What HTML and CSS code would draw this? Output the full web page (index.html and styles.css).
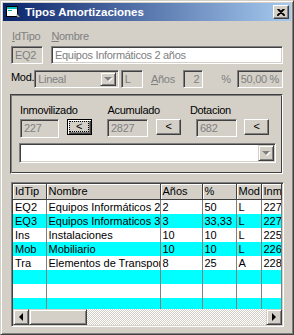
FILE: index.html
```html
<!DOCTYPE html>
<html lang="es">
<head>
    <meta charset="UTF-8">
    <title>Tipos Amortizaciones</title>
    <link rel="stylesheet" href="styles.css">
</head>
<body>
    <div class="window">
        <!-- Barra de título -->
        <div class="titlebar">
            <svg class="app-icon" width="16" height="16" viewBox="0 0 16 16">
                <rect x="1.5" y="2.5" width="11" height="10" fill="#fff" stroke="#000"/>
                <rect x="2" y="3" width="10" height="2" fill="#00c0c0"/>
                <rect x="3" y="6" width="4" height="1" fill="#00a0a0"/>
                <path d="M12 10 L15 13 L12 13 Z" fill="#c0c0c0" stroke="#606060" stroke-width="0.5"/>
            </svg>
            <span class="title">Tipos Amortizaciones</span>
            <div class="close-btn">
                <svg width="8" height="7" viewBox="0 0 8 7">
                    <path d="M0.5 0 L7.5 7 M7.5 0 L0.5 7 M1.5 0 L8 6.5 M6.5 0 L0 6.5" stroke="#000" stroke-width="1.2"/>
                </svg>
            </div>
        </div>

        <div class="content">
            <div class="labels">
                <span class="lbl lbl-id"><u>I</u>dTipo</span>
                <span class="lbl lbl-nombre"><u>N</u>ombre</span>
            </div>
            <div class="row">
                <div class="field f-id">EQ2</div>
                <div class="field f-nombre white">Equipos Informáticos 2 años</div>
            </div>

            <div class="row row-mod">
                <span class="mod-lbl">Mod.</span>
                <div class="field f-combo">
                    <span>Lineal</span>
                    <div class="drop-btn"><i class="tri"></i></div>
                </div>
                <div class="field f-l">L</div>
                <span class="lbl lbl-anos"><u>A</u>ños</span>
                <div class="field f-anos right">2</div>
                <span class="lbl lbl-pct">%</span>
                <div class="field f-pct right">50,00 %</div>
            </div>

            <!-- Valores del tipo -->
            <div class="group">
                <div class="group-labels">
                    <span class="g-inm">Inmovilizado</span>
                    <span class="g-acu">Acumulado</span>
                    <span class="g-dot">Dotacion</span>
                </div>
                <div class="group-row">
                    <div class="field g-f1">227</div>
                    <div class="btn btn-focus"><span class="focus-rect">&lt;</span></div>
                    <div class="field g-f2">2827</div>
                    <div class="btn g-b2">&lt;</div>
                    <div class="field g-f3">682</div>
                    <div class="btn g-b3">&lt;</div>
                </div>
                <div class="field combo-big white">
                    <div class="drop-btn"><i class="tri"></i></div>
                </div>
            </div>

            <!-- Rejilla -->
            <div class="grid">
                <div class="grid-view">
                    <table>
                        <colgroup>
                            <col style="width:33px">
                            <col style="width:114px">
                            <col style="width:42px">
                            <col style="width:34px">
                            <col style="width:25px">
                            <col>
                        </colgroup>
                        <thead>
                            <tr><th>IdTip</th><th>Nombre</th><th>Años</th><th>%</th><th>Mod</th><th>Inmo</th></tr>
                        </thead>
                        <tbody>
                            <tr><td>EQ2</td><td>Equipos Informáticos 2 años</td><td>2</td><td>50</td><td>L</td><td>227</td></tr>
                            <tr class="cyan"><td>EQ3</td><td>Equipos Informaticos 3 años</td><td>3</td><td>33,33</td><td>L</td><td>227</td></tr>
                            <tr><td>Ins</td><td>Instalaciones</td><td>10</td><td>10</td><td>L</td><td>225</td></tr>
                            <tr class="cyan"><td>Mob</td><td>Mobiliario</td><td>10</td><td>10</td><td>L</td><td>226</td></tr>
                            <tr><td>Tra</td><td>Elementos de Transporte</td><td>8</td><td>25</td><td>A</td><td>228</td></tr>
                            <tr class="cyan"><td></td><td></td><td></td><td></td><td></td><td></td></tr>
                            <tr><td></td><td></td><td></td><td></td><td></td><td></td></tr>
                            <tr class="cyan"><td></td><td></td><td></td><td></td><td></td><td></td></tr>
                        </tbody>
                    </table>
                </div>
                <div class="hscroll">
                    <div class="sb-btn"><i class="arr-left"></i></div>
                    <div class="sb-thumb"></div>
                    <div class="sb-track"></div>
                    <div class="sb-btn"><i class="arr-right"></i></div>
                </div>
            </div>
        </div>
    </div>
</body>
</html>
```

FILE: styles.css
```css
body {
    margin: 0;
    background: #d4d0c8;
    font-family: 'Liberation Sans', Arial, sans-serif;
    font-size: 11px;
    letter-spacing: -0.3px;
}

.window {
    width: 294px;
    height: 335px;
    box-sizing: border-box;
    background: #d4d0c8;
    border: 1px solid;
    border-color: #d4d0c8 #404040 #404040 #d4d0c8;
    box-shadow: inset 1px 1px #fff, inset -1px -1px #808080;
    padding: 2px;
}

/* barra de título */
.titlebar {
    height: 18px;
    display: flex;
    align-items: center;
    background: linear-gradient(to right, #0a246a, #a6caf0);
    color: #fff;
}

.app-icon {
    margin-left: 2px;
}

.title {
    margin-left: 4px;
    font-weight: bold;
    font-size: 11.5px;
    letter-spacing: 0;
}

.close-btn {
    margin-left: auto;
    margin-right: 2px;
    width: 16px;
    height: 14px;
    box-sizing: border-box;
    background: #d4d0c8;
    border: 1px solid;
    border-color: #fff #404040 #404040 #fff;
    box-shadow: inset -1px -1px #808080;
    display: flex;
    align-items: center;
    justify-content: center;
}

.content {
    padding: 0 8px;
}

/* etiquetas y campos */
.lbl {
    color: #808080;
}

.labels {
    height: 14px;
    margin-top: 8px;
    display: flex;
    line-height: 14px;
}

.lbl-id {
    margin-left: 1px;
}

.lbl-nombre {
    margin-left: 11px;
}

.row {
    display: flex;
    align-items: center;
    margin-top: 3px;
}

.field {
    box-sizing: border-box;
    height: 18px;
    border: 1px solid;
    border-color: #808080 #fff #fff #808080;
    box-shadow: inset 1px 1px #404040, inset -1px -1px #d4d0c8;
    background: #d4d0c8;
    color: #808080;
    padding: 0 3px;
    line-height: 16px;
    white-space: nowrap;
    overflow: hidden;
}

.field.white {
    background: #fff;
}

.field.right {
    text-align: right;
}

.f-id {
    width: 32px;
}

.f-nombre {
    width: 232px;
    margin-left: 8px;
}

.row-mod {
    margin-top: 6px;
}

.mod-lbl {
    width: 24px;
    color: #000;
    margin-top: -4px;
}

.f-combo {
    width: 88px;
    display: flex;
    padding-right: 2px;
}

.f-combo span {
    flex: 1;
}

.drop-btn {
    width: 16px;
    height: 14px;
    margin-top: 1px;
    box-sizing: border-box;
    background: #d4d0c8;
    border: 1px solid;
    border-color: #d4d0c8 #404040 #404040 #d4d0c8;
    box-shadow: inset 1px 1px #fff, inset -1px -1px #808080;
    display: flex;
    align-items: center;
    justify-content: center;
}

.tri {
    width: 0;
    height: 0;
    border-left: 4px solid transparent;
    border-right: 4px solid transparent;
    border-top: 4px solid #808080;
    filter: drop-shadow(1px 1px 0 #fff);
}

.f-l {
    width: 23px;
    margin-left: 2px;
}

.lbl-anos {
    margin-left: 8px;
}

.f-anos {
    width: 21px;
    margin-left: 8px;
}

.lbl-pct {
    margin-left: 18px;
}

.f-pct {
    width: 48px;
    margin-left: 6px;
}

/* marco */
.group {
    margin: 6px 0 0 -1px;
    height: 80px;
    box-sizing: border-box;
    border: 1px solid;
    border-color: #404040 #fff #fff #404040;
    box-shadow: inset 1px 1px #808080, inset -1px -1px #404040;
    padding: 0 0 0 8px;
}

.group-labels {
    display: flex;
    height: 14px;
    margin-top: 8px;
    line-height: 14px;
}

.g-inm {
    margin-left: 1px;
}

.g-acu {
    margin-left: 30px;
}

.g-dot {
    margin-left: 30px;
}

.group-row {
    display: flex;
    align-items: flex-start;
    margin-top: 2px;
}

.g-f1 {
    width: 39px;
    height: 19px;
    margin-left: 1px;
}

.btn {
    box-sizing: border-box;
    width: 25px;
    height: 16px;
    background: #d4d0c8;
    border: 1px solid;
    border-color: #fff #404040 #404040 #fff;
    box-shadow: inset -1px -1px #808080;
    text-align: center;
    line-height: 13px;
}

.btn-focus {
    margin-left: 8px;
    border-color: #000;
    box-shadow: inset 1px 1px #fff, inset -1px -1px #404040, inset -2px -2px #808080;
    padding: 2px 3px 3px 2px;
    line-height: 9px;
}

.focus-rect {
    display: block;
    height: 9px;
    outline: 1px dotted #000;
}

.g-f2 {
    width: 41px;
    margin-left: 15px;
}

.g-b2 {
    margin-left: 8px;
}

.g-f3 {
    width: 41px;
    margin-left: 15px;
}

.g-b3 {
    margin-left: 7px;
}

.combo-big {
    width: 257px;
    height: 20px;
    margin-top: 5px;
    display: flex;
    justify-content: flex-end;
    padding-right: 1px;
}

.combo-big .drop-btn {
    height: 16px;
}

/* rejilla */
.grid {
    margin: 8px 0 0 0;
    width: 273px;
    height: 145px;
    box-sizing: border-box;
    border: 1px solid;
    border-color: #808080 #fff #fff #808080;
    box-shadow: inset 1px 1px #404040, inset -1px -1px #d4d0c8;
    padding: 1px;
}

.grid-view {
    height: 125px;
    overflow: hidden;
}

table {
    width: 269px;
    table-layout: fixed;
    border-collapse: collapse;
    font-size: 11px;
    letter-spacing: 0;
}

th {
    height: 15px;
    box-sizing: border-box;
    padding: 0 2px;
    text-align: left;
    font-weight: normal;
    background: #d4d0c8;
    border-right: 1px solid #404040;
    border-bottom: 1px solid #404040;
    box-shadow: inset 1px 1px #fff;
    white-space: nowrap;
    overflow: hidden;
    line-height: 13px;
}

td {
    height: 14px;
    padding: 0 2px;
    border-right: 1px solid #808080;
    white-space: nowrap;
    overflow: hidden;
    text-overflow: clip;
    line-height: 14px;
    background: #fff;
}

tr.cyan td {
    background: #00ffff;
}

.hscroll {
    display: flex;
    height: 16px;
}

.sb-btn, .sb-thumb {
    box-sizing: border-box;
    height: 16px;
    background: #d4d0c8;
    border: 1px solid;
    border-color: #d4d0c8 #404040 #404040 #d4d0c8;
    box-shadow: inset 1px 1px #fff, inset -1px -1px #808080;
}

.sb-btn {
    width: 16px;
    display: flex;
    align-items: center;
    justify-content: center;
}

.sb-thumb {
    width: 58px;
}

.sb-track {
    flex: 1;
    background: repeating-conic-gradient(#d4d0c8 0 25%, #fff 0 50%) 0 0 / 2px 2px;
}

.arr-left {
    width: 0;
    height: 0;
    border-top: 4px solid transparent;
    border-bottom: 4px solid transparent;
    border-right: 4px solid #000;
}

.arr-right {
    width: 0;
    height: 0;
    border-top: 4px solid transparent;
    border-bottom: 4px solid transparent;
    border-left: 4px solid #000;
}
```
